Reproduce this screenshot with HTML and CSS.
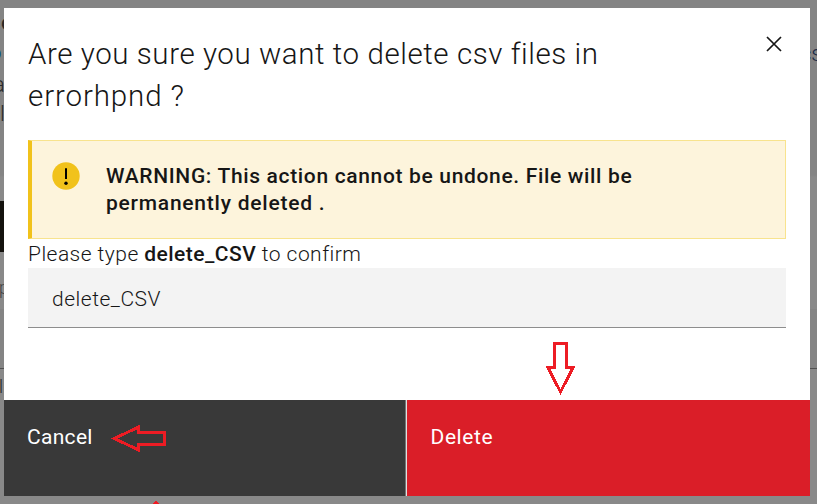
FILE: index.html
```
<!DOCTYPE html>
<html lang="en">
<head>
<meta charset="utf-8">
<title>Delete csv files</title>
<link rel="stylesheet" href="styles.css">
</head>
<body>
<div class="page" aria-hidden="true">
  <div class="band band-black"></div>
  <div class="band band-row"></div>
  <span class="bit bit-c">e</span>
  <span class="bit bit-o">o</span>
  <span class="bit bit-a">a</span>
  <span class="bit bit-l">l</span>
  <span class="bit bit-p">p</span>
  <span class="bit bit-l2">l</span>
  <span class="bit bit-cs">cs</span>
</div>
<main class="modal" role="dialog">
  <header class="header">
    <h1 class="title"><span class="t1">Are you sure you want to delete csv files in</span><br><span class="t2">errorhpnd ?</span></h1>
    <button class="close" aria-label="Close"><svg width="16" height="16" viewBox="0 0 16 16"><path d="M1 1 15 15M15 1 1 15"/></svg></button>
  </header>
  <section class="content">
    <div class="warning">
      <svg class="warn-icon" width="28" height="28" viewBox="0 0 28 28"><circle cx="14" cy="14" r="13.7" fill="#f1c21b"/><path d="M13 6.3h2v10.8h-2z"/><circle cx="14" cy="21.2" r="1.7"/></svg>
      <p class="warn-text"><span class="w1">WARNING: This action cannot be undone. File will be</span><br><span class="w2">permanently deleted .</span></p>
    </div>
    <label class="label" for="confirm">Please type <b>delete_CSV</b> to confirm</label>
    <input class="input" id="confirm" value="delete_CSV">
  </section>
  <footer class="footer">
    <button class="btn cancel">Cancel</button>
    <button class="btn delete">Delete</button>
  </footer>
</main>
<svg class="marks" width="817" height="504" viewBox="0 0 817 504" shape-rendering="crispEdges">
  <path d="M554 343.5H566.5V367.5H573L560.5 392 548 367.5H554Z"/>
  <path d="M164.500 432.500V444.500H138.500V450L114.500 438.500 138.500 427V432.500Z"/>
  <path d="M154 505 156 502.500 158 505"/>
</svg>
</body>
</html>
```
FILE: styles.css
```
* { box-sizing: border-box; }
body {
  margin: 0;
  width: 817px;
  height: 504px;
  overflow: hidden;
  background: #868686;
  color: #161616;
  font-family: Roboto, "Open Sans", sans-serif;
  padding: 8px 7px 8px 4px;
}
.page { position: absolute; inset: 0; overflow: hidden; background: linear-gradient(#848484 175px, #898989 177px); }
.band { position: absolute; left: 0; }
.band-black { top: 201px; width: 8px; height: 51px; background: #14120e; }
.band-row { top: 309px; width: 817px; height: 60px; background: #848484; border-bottom: 1px solid #505050; }
.bit { position: absolute; font-size: 22px; line-height: 26px; font-weight: 300; color: #292929; }
.bit-c { left: 1px; top: 10px; font-weight: 500; }
.bit-o { left: -11px; top: 40px; color: #064680; font-weight: 400; }
.bit-a { left: -7px; top: 72px; }
.bit-l { left: 0; top: 101px; }
.bit-p { left: -1px; top: 275px; font-size: 18px; color: #444; }
.bit-l2 { left: -1px; top: 374px; font-size: 18px; }
.bit-cs { left: 800px; top: 41px; color: #182a46; }
.modal {
  position: relative;
  display: flex;
  flex-direction: column;
  width: 806px;
  height: 488px;
  background: #fff;
}
.header { display: flex; justify-content: space-between; height: 132px; padding: 25px 28px 0 24px; }
.title { margin: 0; font-size: 29.5px; line-height: 42px; font-weight: 300; white-space: nowrap; }
.t1 { letter-spacing: 0.57px; }
.t2 { letter-spacing: 0.88px; }
.close { width: 16px; height: 16px; margin-top: 3px; padding: 0; border: 0; background: none; }
.close svg { display: block; fill: none; stroke: #161616; stroke-width: 1.7; }
.content { flex: 1; display: flex; flex-direction: column; padding: 0 24px; }
.warning {
  display: flex;
  height: 99px;
  padding: 21px 20px 0;
  background: #fdf4dc;
  border: 1px solid #f8e38e;
  border-left: 4px solid #f1c21b;
}
.warn-icon { flex: none; }
.warn-text { margin: 1px 0 0 26px; font-size: 21px; line-height: 27px; font-weight: 500; white-space: nowrap; }
.w1 { letter-spacing: 0.66px; }
.w2 { letter-spacing: 0.76px; }
.label { height: 29px; font-size: 21px; line-height: 30px; font-weight: 300; letter-spacing: 0.46px; white-space: nowrap; }
.label b { font-weight: 500; }
.input {
  height: 60px;
  padding: 2px 24px 0;
  border: 0;
  border-bottom: 1px solid #8d8d8d;
  background: #f3f3f3;
  color: #161616;
  font: 300 21px Roboto, sans-serif;
  letter-spacing: 0.52px;
  outline: 0;
}
.footer { display: flex; height: 96px; }
.btn {
  display: flex;
  align-items: flex-start;
  flex: 1;
  padding: 24px 24px 0;
  border: 0;
  color: #fff;
  font: 400 21px/26px Roboto, sans-serif;
}
.cancel { padding-left: 23px; background: #393939; letter-spacing: 0.3px; }
.delete { background: #da1e28; letter-spacing: 0.6px; box-shadow: -1px 0 0 #e0e0e0, -2px 0 0 #777; }
.marks { position: absolute; left: 0; top: 0; pointer-events: none; fill: none; stroke: #ed1c24; stroke-width: 3; }
```
